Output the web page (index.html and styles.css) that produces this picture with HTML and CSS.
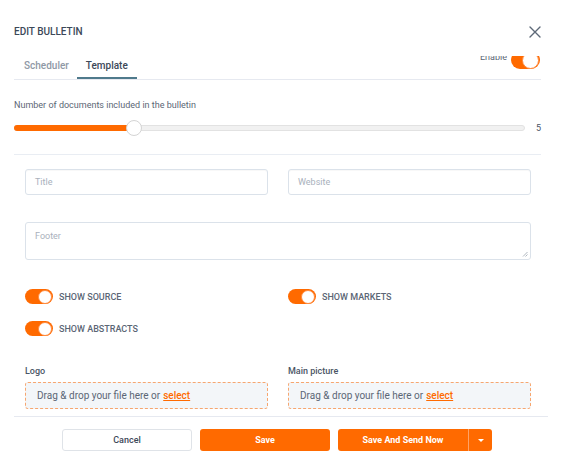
FILE: index.html
```html
<!DOCTYPE html>
<html>
<head>
<meta charset="utf-8">
<link rel="stylesheet" href="styles.css">
</head>
<body>
<div class="modal">
  <div class="head">
    <div class="title">EDIT BULLETIN</div>
    <svg class="close" width="12" height="12" viewBox="0 0 12 12"><path d="M1 1L11 11M11 1L1 11" stroke="#5d6978" stroke-width="1.4" stroke-linecap="round"/></svg>
  </div>
  <div class="tabs">
    <div class="tab">Scheduler</div>
    <div class="tab active">Template</div>
    <div class="spacer"></div>
    <div class="enable-clip">
      <div class="enable">
        <span class="enable-text">Enable</span>
        <span class="toggle"><span class="knob"></span></span>
      </div>
    </div>
  </div>

  <div class="slider-block">
    <div class="label">Number of documents included in the bulletin</div>
    <div class="slider-row">
      <div class="track">
        <div class="fill"></div>
        <div class="thumb"></div>
      </div>
      <div class="value">5</div>
    </div>
  </div>

  <div class="form">
    <div class="grid">
      <div class="input">Title</div>
      <div class="input">Website</div>
    </div>
    <div class="textarea">Footer
      <svg class="grip" width="6" height="6" viewBox="0 0 6 6"><path d="M5.5 1L1 5.5M5.5 3.5L3.5 5.5" stroke="#9aa3ad" stroke-width="0.8"/></svg>
    </div>
    <div class="grid toggles">
      <div class="opt"><span class="toggle"><span class="knob"></span></span><span>SHOW SOURCE</span></div>
      <div class="opt"><span class="toggle"><span class="knob"></span></span><span>SHOW MARKETS</span></div>
      <div class="opt"><span class="toggle"><span class="knob"></span></span><span>SHOW ABSTRACTS</span></div>
    </div>
    <div class="grid uploads">
      <div class="upload">
        <div class="up-label">Logo</div>
        <div class="drop">Drag &amp; drop your file here or <span class="sel">select</span></div>
      </div>
      <div class="upload">
        <div class="up-label">Main picture</div>
        <div class="drop">Drag &amp; drop your file here or <span class="sel">select</span></div>
      </div>
    </div>
  </div>

  <div class="foot">
    <div class="btn cancel">Cancel</div>
    <div class="btn primary">Save</div>
    <div class="split">
      <div class="btn primary main">Save And Send Now</div>
      <div class="btn primary caret"><span class="tri"></span></div>
    </div>
  </div>
</div>
</body>
</html>
```
FILE: styles.css
```css
* { box-sizing: border-box; }
body {
  margin: 0;
  background: #fff;
  font-family: Roboto, "Liberation Sans", sans-serif;
  color: #3c4858;
}
.modal {
  width: 564px;
  height: 471px;
  padding: 0 23px 0 14px;
}
.head {
  display: flex;
  justify-content: space-between;
  align-items: center;
  padding-top: 24px;
  height: 40px;
}
.title {
  font-size: 10px;
  font-weight: 500;
  color: #3c4858;
  line-height: 16px;
}
.close { margin-right: 0; }
.tabs {
  display: flex;
  align-items: flex-start;
  margin-top: 16px;
  border-bottom: 1px solid #e6e9f0;
  width: 527px;
}
.tab {
  font-size: 10px;
  font-weight: 500;
  line-height: 14px;
  padding: 3px 9px 4px;
  color: #8f99a6;
  border-bottom: 2px solid transparent;
}
.tab:first-child { padding-left: 10px; padding-right: 8px; }
.tab.active {
  color: #3c4858;
  border-bottom-color: #4f7a8c;
}
.spacer { flex: 1; }
.enable-clip {
  height: 13px;
  overflow: hidden;
  display: flex;
  align-items: flex-end;
  margin-right: 1px;
}
.enable {
  display: flex;
  align-items: center;
  gap: 4px;
}
.enable-text {
  font-size: 9px;
  color: #5b6675;
  line-height: 12px;
  margin-bottom: 6px;
}
.toggle {
  display: inline-block;
  position: relative;
  width: 28px;
  height: 15px;
  border-radius: 8px;
  background: #ff6a00;
  flex: none;
}
.knob {
  position: absolute;
  right: 1px;
  top: 0.5px;
  width: 14px;
  height: 14px;
  border-radius: 50%;
  background: #fff;
  border: 1px solid #ff8a3d;
}
.enable .toggle { width: 29px; height: 18px; border-radius: 9px; }
.enable .knob { width: 17px; height: 17px; top: 0.5px; }

.slider-block { padding-top: 19px; }
.label {
  font-size: 9px;
  line-height: 12px;
  color: #5b6675;
}
.slider-row {
  display: flex;
  align-items: center;
  margin-top: 9px;
  height: 16px;
}
.track {
  position: relative;
  width: 512px;
  height: 6px;
  border-radius: 3px;
  background: #f1f1f1;
  border: 1px solid #e2e2e2;
}
.fill {
  position: absolute;
  left: -1px;
  top: -1px;
  height: 6px;
  width: 120px;
  border-radius: 3px 0 0 3px;
  background: #ff6a00;
}
.thumb {
  position: absolute;
  left: 111px;
  top: -6px;
  width: 16px;
  height: 16px;
  border-radius: 50%;
  background: #fff;
  border: 1px solid #d4d4d4;
}
.value {
  font-size: 9px;
  color: #4a5565;
  margin-left: 11px;
}
.form {
  margin-top: 18px;
  border-top: 1px solid #e9edf3;
  padding: 14px 10px 7px 11px;
  width: 527px;
}
.grid {
  display: grid;
  grid-template-columns: 243px 243px;
  column-gap: 20px;
}
.input {
  height: 26px;
  border: 1px solid #dbe2ea;
  border-radius: 3px;
  font-size: 9px;
  color: #a9b1bc;
  padding: 0 9px;
  display: flex;
  align-items: center;
  box-shadow: inset 0 1px 1px rgba(0,0,0,0.03);
}
.textarea {
  position: relative;
  margin-top: 27px;
  height: 38px;
  border: 1px solid #dbe2ea;
  border-radius: 3px;
  font-size: 9px;
  color: #a9b1bc;
  padding: 8px 9px;
}
.grip { position: absolute; right: 2px; bottom: 2px; }
.toggles {
  margin-top: 29px;
  row-gap: 17px;
}
.opt {
  display: flex;
  align-items: center;
  gap: 6px;
  font-size: 9px;
  font-weight: 500;
  color: #5b6675;
  height: 15px;
}
.uploads { margin-top: 29px; }
.up-label {
  font-size: 9px;
  font-weight: 500;
  line-height: 12px;
  color: #4a5565;
}
.drop {
  margin-top: 5px;
  height: 27px;
  background: #f3f6f9;
  border: 1px dashed #f7a66f;
  border-radius: 3px;
  font-size: 10px;
  color: #5b6675;
  display: flex;
  align-items: center;
  padding: 0 11px;
}
.sel {
  color: #ff6a00;
  font-weight: 500;
  text-decoration: underline;
  margin-left: 3px;
}
.foot {
  border-top: 1px solid #e6e9f0;
  width: 534px;
  display: flex;
  justify-content: flex-start;
  gap: 8px;
  padding-top: 12px;
  padding-left: 48px;
}
.btn {
  height: 22px;
  width: 130px;
  border-radius: 3px;
  font-size: 9px;
  font-weight: 700;
  display: flex;
  align-items: center;
  justify-content: center;
}
.cancel {
  background: #fff;
  border: 1px solid #dfe3e8;
  color: #3c4858;
  font-weight: 500;
}
.primary {
  background: #ff6a00;
  color: #fff;
}
.split { display: flex; }
.split .main { border-radius: 3px 0 0 3px; }
.split .caret {
  width: 24px;
  border-radius: 0 3px 3px 0;
  border-left: 1px solid #ffa266;
}
.tri {
  width: 0; height: 0;
  border-left: 3px solid transparent;
  border-right: 3px solid transparent;
  border-top: 3px solid #fff;
}
```
